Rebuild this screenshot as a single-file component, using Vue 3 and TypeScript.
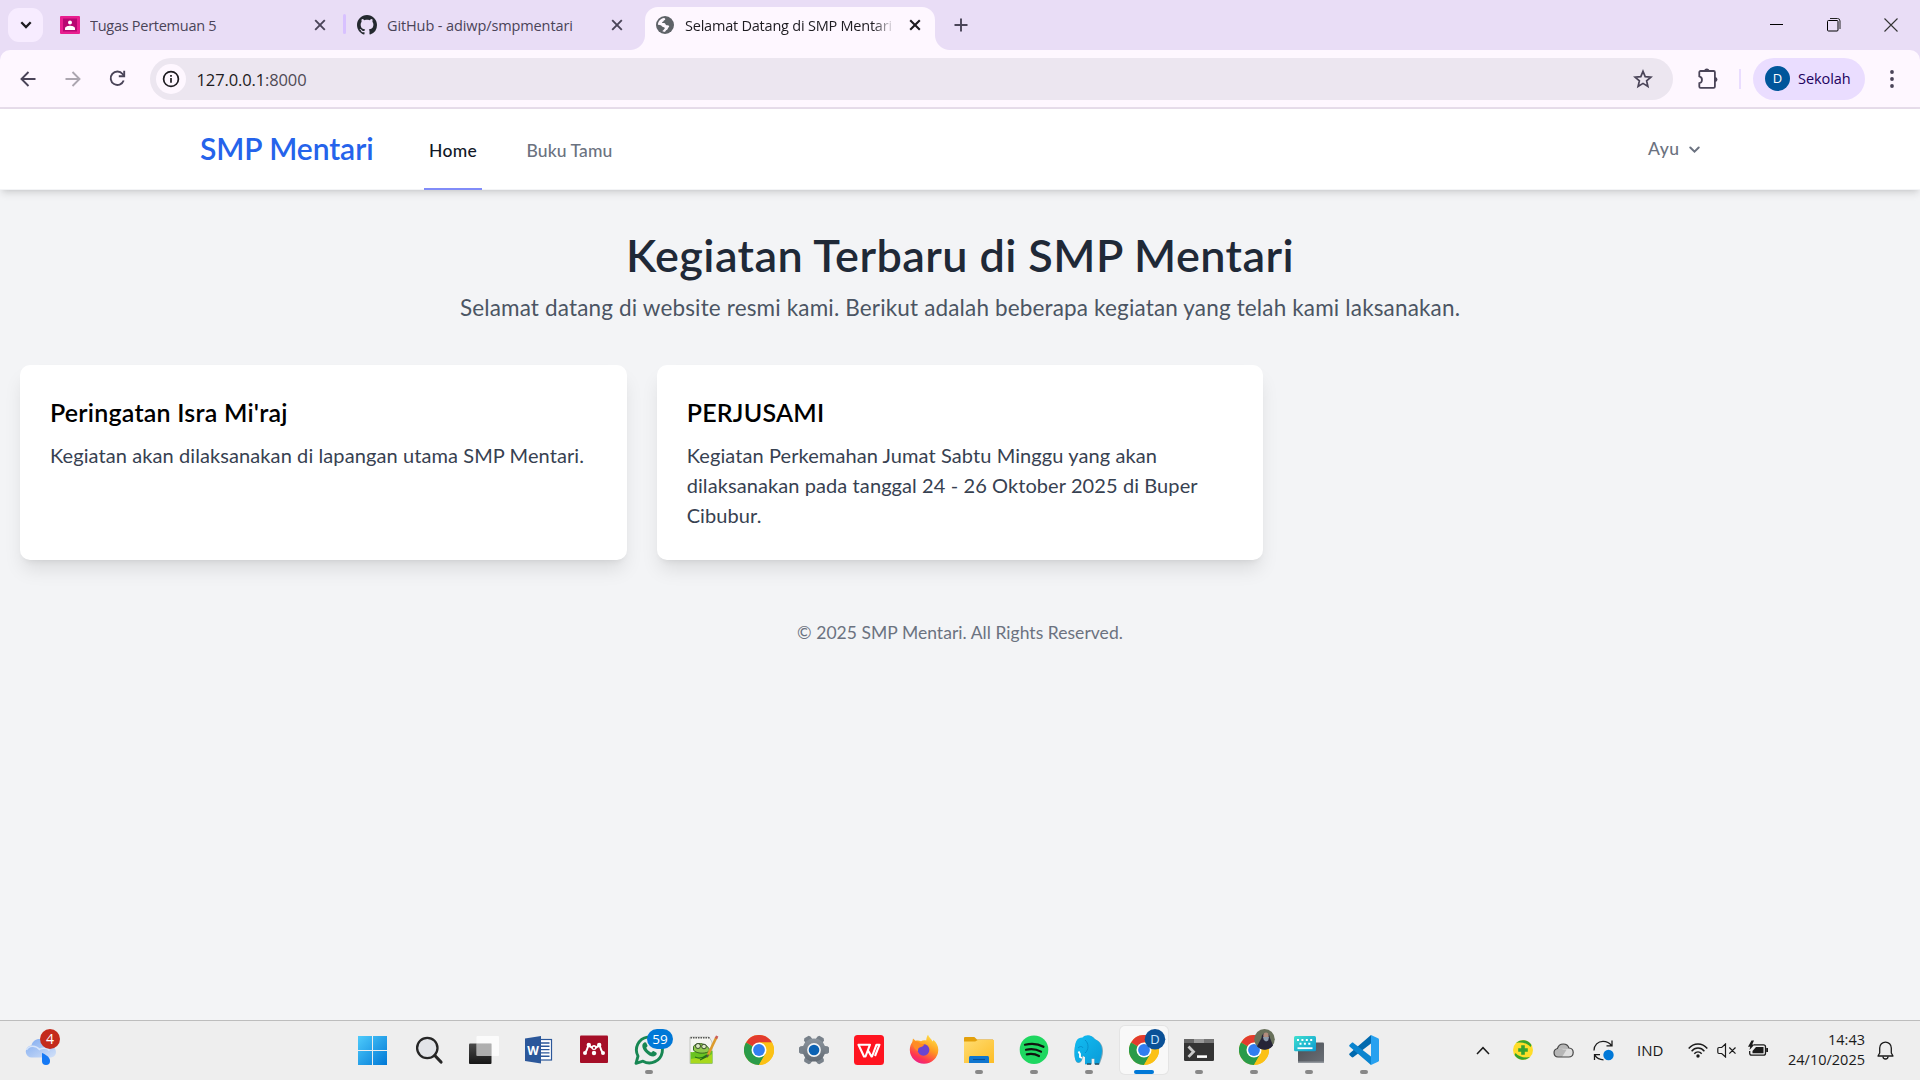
<script setup lang="ts">
import { ref } from 'vue'

interface Activity {
  title: string
  body: string
}

const activities = ref<Activity[]>([
  { title: "Peringatan Isra Mi'raj", body: 'Kegiatan akan dilaksanakan di lapangan utama SMP Mentari.' },
  { title: 'PERJUSAMI', body: 'Kegiatan Perkemahan Jumat Sabtu Minggu yang akan dilaksanakan pada tanggal 24 - 26 Oktober 2025 di Buper Cibubur.' },
])

interface TaskItem {
  icon: string
  state?: 'open' | 'active'
}

const tasks: TaskItem[] = [
  { icon: 'start' },
  { icon: 'search' },
  { icon: 'taskview' },
  { icon: 'word' },
  { icon: 'mendeley' },
  { icon: 'whatsapp', state: 'open' },
  { icon: 'notepad' },
  { icon: 'chrome' },
  { icon: 'settings' },
  { icon: 'wps' },
  { icon: 'firefox' },
  { icon: 'folder', state: 'open' },
  { icon: 'spotify', state: 'open' },
  { icon: 'elephant', state: 'open' },
  { icon: 'chrome-d', state: 'active' },
  { icon: 'terminal', state: 'open' },
  { icon: 'chrome-photo', state: 'open' },
  { icon: 'keyboard', state: 'open' },
  { icon: 'vscode', state: 'open' },
]

const teeth = [30, 90, 150, 210, 270, 330]
</script>

<template>
  <div class="screen">
    <header class="tabstrip">
      <button class="tab-search">
        <svg width="12" height="8" viewBox="0 0 12 8"><path d="M1.3 1.3 6 6l4.700-4.700" fill="none" stroke="#1d1b20" stroke-width="2.300" /></svg>
      </button>
      <div class="tab tab-one">
        <svg class="favicon" width="20" height="18" viewBox="0 0 20 18">
          <rect width="20" height="18" rx="1" fill="#e91e8f" />
          <rect x="3" y="2.500" width="14" height="13" fill="#b80672" />
          <circle cx="10" cy="6.500" r="2" fill="#fff" />
          <path d="M5 14v-1.500c0-2 3-2.800 5-2.800s5 .8 5 2.800V14z" fill="#fff" />
        </svg>
        <span class="tab-title title-one">Tugas Pertemuan 5</span>
        <svg class="close" width="12" height="12" viewBox="0 0 12 12"><path d="M1.200 1.200l9.600 9.600M10.800 1.200l-9.600 9.600" stroke="#4a4458" stroke-width="1.900" /></svg>
      </div>
      <i class="tab-sep"></i>
      <div class="tab tab-two">
        <svg class="favicon" width="20" height="20" viewBox="0 0 16 16"><path fill="#24292f" d="M8 0C3.580 0 0 3.580 0 8c0 3.540 2.290 6.530 5.470 7.590.4.070.55-.17.55-.38 0-.19-.01-.82-.01-1.490-2.010.37-2.530-.49-2.690-.94-.09-.23-.48-.94-.82-1.130-.28-.15-.68-.52-.01-.53.63-.01 1.080.58 1.230.82.72 1.210 1.870.87 2.330.66.07-.52.28-.87.51-1.070-1.780-.2-3.640-.89-3.640-3.950 0-.87.31-1.590.82-2.150-.08-.2-.36-1.020.08-2.120 0 0 .67-.21 2.200.82.64-.18 1.320-.27 2-.27s1.360.09 2 .27c1.530-1.040 2.200-.82 2.200-.82.44 1.100.16 1.920.08 2.120.51.56.82 1.270.82 2.150 0 3.070-1.870 3.750-3.650 3.950.29.25.54.73.54 1.480 0 1.070-.01 1.930-.01 2.200 0 .21.15.46.55.38A8.010 8.010 0 0 0 16 8c0-4.420-3.580-8-8-8z" /></svg>
        <span class="tab-title title-two">GitHub - adiwp/smpmentari</span>
        <svg class="close" width="12" height="12" viewBox="0 0 12 12"><path d="M1.200 1.200l9.600 9.600M10.800 1.200l-9.600 9.600" stroke="#4a4458" stroke-width="1.900" /></svg>
      </div>
      <div class="tab tab-active">
        <svg class="favicon" width="18" height="18" viewBox="0 0 18 18">
          <circle cx="9" cy="9" r="9" fill="#5f6368" />
          <path d="M1.900 8.700C2 5.200 4.600 2.300 8 1.900c.9.100 1.500.7 1.200 1.500-.3.900-1.500.7-1.600 1.500-.1.900-1.400.6-1.500 1.500 0 .8 1 .7 2 .7 1.200 0 1.200 1.300 1.900 1.800.8.600 2.300 0 3 .9.600.9-.5 1.500-.9 2.300-.5.900-.6 1.700-1.500 1.900-.9.300-.8 1.400-1.900 1.800-.8.300-2-.1-2.300-.8l1.200-.9c.3-1 1.300-1.200 1.200-2.200-.2-1-1.500-.7-2.300-1.200C5.600 10 5 9.100 3.800 9z" fill="#fef7ff" />
        </svg>
        <span class="tab-title title-active">Selamat Datang di SMP Mentari</span>
        <svg class="close" width="12" height="12" viewBox="0 0 12 12"><path d="M1.200 1.200l9.600 9.600M10.800 1.200l-9.600 9.600" stroke="#1d1b20" stroke-width="2.100" /></svg>
      </div>
      <svg class="new-tab" width="14" height="14" viewBox="0 0 14 14"><path d="M7 .5v13M.5 7h13" stroke="#4a4458" stroke-width="1.900" /></svg>
      <div class="window-controls">
        <svg width="14" height="14" viewBox="0 0 14 14" shape-rendering="crispEdges"><path d="M0 6.500h13" stroke="#000" /></svg>
        <svg width="14" height="14" viewBox="0 0 14 14"><rect x=".5" y="2.500" width="10.500" height="10.500" rx="1" fill="none" stroke="#000" /><path d="M3 .5h7.500a2.500 2.500 0 0 1 2.500 2.500v8" fill="none" stroke="#222" /></svg>
        <svg width="14" height="14" viewBox="0 0 14 14"><path d="M.5.5l13 13M13.500.5l-13 13" stroke="#333" stroke-width="1.100" /></svg>
      </div>
    </header>

    <div class="toolbar-wrap">
      <div class="toolbar">
        <div class="nav-icons">
          <svg width="16" height="16" viewBox="0 0 16 16"><path d="M15.500 8H2M8.500 1 1.500 8l7 7" fill="none" stroke="#4a4458" stroke-width="1.900" /></svg>
          <svg width="16" height="16" viewBox="0 0 16 16"><path d="M.5 8H14M7.500 1l7 7-7 7" fill="none" stroke="#aca6b0" stroke-width="1.900" /></svg>
          <svg width="17" height="17" viewBox="0 0 17 17"><path d="M14.700 10.500A6.700 6.700 0 1 1 13.600 4l1.400 2" fill="none" stroke="#4a4458" stroke-width="1.900" /><path d="M15.200.8V6.300H9.800" fill="none" stroke="#4a4458" stroke-width="1.900" /></svg>
        </div>
        <div class="omnibox">
          <span class="site-info">
            <svg width="18" height="18" viewBox="0 0 18 18"><circle cx="9" cy="9" r="7.400" fill="none" stroke="#1d1b20" stroke-width="1.700" /><path d="M9 8v4.700M9 4.900v1.900" stroke="#1d1b20" stroke-width="1.700" /></svg>
          </span>
          <span class="url">127.0.0.1<span class="port">:8000</span></span>
          <svg class="star" width="20" height="20" viewBox="0 0 20 20"><path d="M10 2.300l2.200 5.300 5.700.5-4.300 3.700 1.300 5.600L10 14.400l-4.900 3 1.300-5.600-4.300-3.700 5.700-.5z" fill="none" stroke="#4a4458" stroke-width="1.700" /></svg>
        </div>
        <svg class="puzzle" width="22" height="22" viewBox="0 0 22 22"><path d="M2.300 4.300c0-.8.500-1.300 1.300-1.300h13c.8 0 1.300.5 1.300 1.300v14.200c0 .8-.5 1.300-1.300 1.300h-13c-.8 0-1.300-.5-1.300-1.300v-3.300c3.300-.5 3.800-5.800 0-6.800z" fill="none" stroke="#4a4458" stroke-width="1.800" /><path d="M7.200 3a2.600 2.600 0 0 1 5.200 0zM18 9a2.500 2.500 0 0 1 0 5z" fill="#4a4458" /></svg>
        <i class="tool-sep"></i>
        <div class="profile"><span class="avatar">D</span><span class="profile-name">Sekolah</span></div>
        <svg class="menu-dots" width="4" height="18" viewBox="0 0 4 18"><circle cx="2" cy="2" r="1.900" fill="#4a4458" /><circle cx="2" cy="9" r="1.900" fill="#4a4458" /><circle cx="2" cy="16" r="1.900" fill="#4a4458" /></svg>
      </div>
    </div>

    <div class="page">
      <nav class="navbar">
        <div class="navbar-inner">
          <a class="brand">SMP Mentari</a>
          <a class="link link-active">Home</a>
          <a class="link link-guest">Buku Tamu</a>
          <div class="user">
            <span>Ayu</span>
            <svg width="11" height="8" viewBox="0 0 11 8"><path d="M1.300 1.500 5.500 5.700 9.700 1.500" fill="none" stroke="#6b7280" stroke-width="2" stroke-linecap="round" /></svg>
          </div>
        </div>
      </nav>
      <main class="main">
        <h1>Kegiatan Terbaru di SMP Mentari</h1>
        <p class="lead">Selamat datang di website resmi kami. Berikut adalah beberapa kegiatan yang telah kami laksanakan.</p>
        <section class="cards">
          <article v-for="activity in activities" :key="activity.title" class="card">
            <h2>{{ activity.title }}</h2>
            <p>{{ activity.body }}</p>
          </article>
        </section>
        <footer>© 2025 SMP Mentari. All Rights Reserved.</footer>
      </main>
    </div>

    <div class="taskbar">
      <svg width="0" height="0" class="defs">
        <defs>
          <linearGradient id="winBlue" x1="0" y1="0" x2="1" y2="1"><stop offset="0" stop-color="#4ecbfb" /><stop offset="1" stop-color="#0078d6" /></linearGradient>
          <linearGradient id="darkSheet" x1="0" y1="0" x2="0" y2="1"><stop offset="0" stop-color="#4a4a4a" /><stop offset="1" stop-color="#161616" /></linearGradient>
          <linearGradient id="foldYellow" x1="0" y1="0" x2="1" y2="1"><stop offset="0" stop-color="#ffdc71" /><stop offset="1" stop-color="#fdbd26" /></linearGradient>
          <linearGradient id="foxOrange" x1=".8" y1="0" x2=".3" y2="1"><stop offset="0" stop-color="#ffe64a" /><stop offset=".45" stop-color="#ff9a1f" /><stop offset=".8" stop-color="#ff3750" /><stop offset="1" stop-color="#e91e8c" /></linearGradient>
          <linearGradient id="keyTeal" x1="0" y1="0" x2="1" y2="1"><stop offset="0" stop-color="#3fe0cf" /><stop offset="1" stop-color="#0a9ad2" /></linearGradient>
          <linearGradient id="slate" x1="0" y1="0" x2="1" y2="1"><stop offset="0" stop-color="#4a4e54" /><stop offset="1" stop-color="#6b7077" /></linearGradient>
          <linearGradient id="gearGrey" x1="0" y1="0" x2="0" y2="1"><stop offset="0" stop-color="#8b949d" /><stop offset="1" stop-color="#626a73" /></linearGradient>
          <linearGradient id="cloudBlue" x1="0" y1="0" x2="1" y2="1"><stop offset="0" stop-color="#7fabf0" /><stop offset="1" stop-color="#d3e1f8" /></linearGradient>
          <linearGradient id="elephantBlue" x1="0" y1="0" x2="1" y2="1"><stop offset="0" stop-color="#12bdf2" /><stop offset="1" stop-color="#0a9bd8" /></linearGradient>
          <symbol id="chromeLogo" viewBox="0 0 30 30">
            <circle cx="15" cy="15" r="15" fill="#fbc116" />
            <path d="M15 15 2 7.500A15 15 0 0 1 28 7.500H15z" fill="#e33b2e" />
            <path d="M2 7.500A15 15 0 0 0 15 30L21.500 18.750 15 15z" fill="#2a9b49" />
            <path d="M15 7.500H28A15 15 0 0 1 15 30L21.500 18.750z" fill="#fbc116" />
            <circle cx="15" cy="15" r="7.500" fill="#fff" />
            <circle cx="15" cy="15" r="5.900" fill="#327ef0" />
          </symbol>
        </defs>
      </svg>

      <div class="weather">
        <svg width="36" height="40" viewBox="0 0 36 40">
          <path d="M7 29.500a6 6 0 0 1-.5-12C7.300 13.500 10.500 11 14.500 11c4.500 0 8 3 8.500 7 4.500-.5 8 2 8 6 0 3.300-2.500 5.500-6 5.500z" fill="url(#cloudBlue)" />
          <path d="M1.500 22c2-4.500 9-5.500 13-.5 3-2 8-1.500 10 1" stroke="#e4eefc" stroke-width="1.500" fill="none" opacity=".8" />
          <path d="M17 25c3.500 1.500 8 4 8 8a4 4 0 0 1-8 0z" fill="#1579f5" />
        </svg>
        <span class="weather-badge">4</span>
      </div>

      <div class="tasks">
        <div v-for="(task, i) in tasks" :key="i" class="task" :class="task.state">
          <svg width="48" height="48" viewBox="0 0 48 48">
            <g v-if="task.icon === 'start'">
              <path d="M8 10h14v14H8zM23 10h14v14H23zM8 25h14v14H8zM23 25h14v14H23z" fill="url(#winBlue)" />
            </g>
            <g v-else-if="task.icon === 'search'">
              <circle cx="22.300" cy="22" r="10.200" fill="#e2e4e8" stroke="#262626" stroke-width="2.300" />
              <path d="M29.800 29.500l6.200 6.500" stroke="#262626" stroke-width="3.200" stroke-linecap="round" />
            </g>
            <g v-else-if="task.icon === 'taskview'">
              <rect x="9" y="17.500" width="22.500" height="20.500" rx="1" fill="url(#darkSheet)" />
              <rect x="16.500" y="10" width="22.500" height="20" rx="1" fill="#fff" fill-opacity=".78" />
              <path d="M16.500 17.500h15V30h-15z" fill="#8f8f8f" fill-opacity=".55" />
            </g>
            <g v-else-if="task.icon === 'word'">
              <rect x="24" y="13.500" width="12.500" height="20.500" fill="#fff" stroke="#2b579a" stroke-width="1.200" />
              <path d="M26 17h8.500M26 20.300h8.500M26 23.600h8.500M26 26.900h8.500M26 30.200h8.500" stroke="#2b579a" stroke-width="1.400" />
              <path d="M10 12.500 26 10v27.500L10 35z" fill="#2b579a" />
              <text x="18" y="28.500" text-anchor="middle" class="glyph" font-size="12" font-weight="700" fill="#fff">W</text>
            </g>
            <g v-else-if="task.icon === 'mendeley'">
              <rect x="10" y="9.500" width="28" height="27.500" rx="1" fill="#a50e27" />
              <path d="M15.500 26c1.800-1.500 1.300-3.500 2.800-6 2.200-.5 3.500 2.400 5.700 2.400s3.500-2.900 5.700-2.400c1.500 2.500 1 4.500 2.800 6" fill="none" stroke="#fff" stroke-width="2" />
              <circle cx="18.800" cy="19" r="2.200" fill="#fff" /><circle cx="29.200" cy="19" r="2.200" fill="#fff" />
              <circle cx="24" cy="21.500" r="2.500" fill="#fff" /><circle cx="24" cy="21.800" r="1.100" fill="#a50e27" />
              <circle cx="15" cy="27" r="2" fill="#fff" /><circle cx="24" cy="27" r="2.200" fill="#fff" /><circle cx="33" cy="27" r="2" fill="#fff" />
            </g>
            <g v-else-if="task.icon === 'whatsapp'">
              <path d="M11 37.300l2-7.200a13 13 0 1 1 5 5.100z" fill="#ededed" stroke="#178753" stroke-width="2.900" stroke-linejoin="round" />
              <path d="M19.300 16.500c-3 1.500-2.600 5.600 1.200 9.700 3.800 4 8.400 5.700 10.700 2.900.8-1 .6-2 0-2.500l-2.700-1.600c-1-.5-1.500 1.600-2.500 1.400-2-.7-4-2.700-4.700-4.600 0-.8 1.600-1.300 1.200-2.400l-1.300-2.600c-.4-.7-1.200-.7-1.900-.3z" fill="#178753" />
              <rect x="22" y="3" width="26" height="20" rx="10" fill="#0078d7" />
              <text x="35" y="18" text-anchor="middle" class="glyph" font-size="13.500" fill="#fff">59</text>
            </g>
            <g v-else-if="task.icon === 'notepad'">
              <path d="M10 11h19l3 5v21.500H10z" fill="#f4f5f1" stroke="#b6b9b2" stroke-width=".8" />
              <path d="M10.500 11.700h20" stroke="#555" stroke-width="1.600" stroke-dasharray="1.500 1" />
              <path d="M10.500 26c5 1 7-3 12-2 4 1 7-1 10 1v12.500h-22z" fill="#6ac321" />
              <path d="M11 33c6-2 14 1 21-5v9H11z" fill="#a8d81c" />
              <path d="M13.500 20.500c2-3.500 8-4 12.500-1 3.500 2.500 4.500 5 2 6.500-4 2-12.500 1.500-14.500-2z" fill="#90c94b" stroke="#2e5d18" stroke-width=".9" />
              <circle cx="18" cy="20" r="2.500" fill="#dbe8c2" stroke="#293d20" stroke-width=".9" /><circle cx="24" cy="20.500" r="2.300" fill="#dbe8c2" stroke="#293d20" stroke-width=".9" />
              <path d="M15 31c4 2 8 1 12-2M20 34l8-4" stroke="#256d17" fill="none" stroke-width="1.200" />
              <path d="M36.300 11.500 28 29" stroke="#dc9b2c" stroke-width="2.600" /><path d="M37.200 10l-1.300 2.600" stroke="#cb5d55" stroke-width="2.600" /><path d="M28.300 28.500l-1.200 2.800" stroke="#5d5348" stroke-width="1.500" />
            </g>
            <use v-else-if="task.icon === 'chrome'" href="#chromeLogo" x="9" y="9" width="30" height="30" />
            <g v-else-if="task.icon === 'settings'">
              <path v-for="angle in teeth" :key="angle" d="M19.500 18l.8-7.500L21.500 9h5l1.200 1.500.8 7.500z" fill="#78818a" :transform="`rotate(${angle} 24 24)`" />
              <circle cx="24" cy="24" r="11.500" fill="url(#gearGrey)" />
              <circle cx="24" cy="24" r="6.900" fill="#f3f4f5" /><circle cx="24" cy="24" r="5.300" fill="#0b62b3" />
            </g>
            <g v-else-if="task.icon === 'wps'">
              <rect x="9" y="9" width="30" height="30" rx="3.500" fill="#ff1420" />
              <path d="M13.500 18.700h11.500L20.500 30.500l-1.500 0zM23 24.500l3.500 6h.5l4.500-11.800h3L30 30" fill="none" stroke="#fff" stroke-width="2.100" stroke-linejoin="round" />
            </g>
            <g v-else-if="task.icon === 'firefox'">
              <path d="M28 8.800c1 3 3.500 4 4.500 6.700l1-1.500c3 2.500 4.800 6 4.800 10A14.200 14.200 0 0 1 24 37.800 14.200 14.200 0 0 1 9.800 24c0-3.300 1-6 2.500-8l.7-3.500 2.500 2.300c2-.7 4-.4 5.500.4 1.500-1 3.500-1.200 5.200-.7.2-2 .6-4 1.800-5.700z" fill="url(#foxOrange)" />
              <circle cx="23.500" cy="23.800" r="5.900" fill="#6b45d0" />
              <path d="M13 15.500c3-1 6 .5 7.500 2.300l4 .4c-1 2-3 2.700-4.800 3.200-1.700.5-1.700 2.300-1.700 3.600-3-1-6-5-5-9.500z" fill="#ff8b25" />
            </g>
            <g v-else-if="task.icon === 'folder'">
              <path d="M9 12.300c0-.8.500-1.300 1.300-1.300H19c.8 0 2 1.800 3 2.500H38l1 4H9z" fill="#e3a00b" />
              <path d="M9 15.500h11c1 0 2-1.500 3-1.500h16v23H9z" fill="url(#foldYellow)" />
              <path d="M14 37v-5.500c0-1 .6-1.600 1.600-1.600h16.800c1 0 1.600.6 1.600 1.600V37z" fill="#1076cf" />
              <path d="M18 33.500h12" stroke="#0a4f96" stroke-width="1.100" />
            </g>
            <g v-else-if="task.icon === 'spotify'">
              <circle cx="24" cy="23.700" r="14.300" fill="#1ed760" />
              <path d="M15 18.700c6-1.500 13.500-.8 18.500 2.100M16 23.700c5-1.200 10.500-.6 15 1.900M16.800 28.300c4.300-.9 8.500-.4 12.200 1.700" fill="none" stroke="#10150f" stroke-linecap="round" stroke-width="2.200" />
            </g>
            <g v-else-if="task.icon === 'elephant'">
              <path d="M18 12c3-3.500 10-3 12.500 1.500C35 15 38 19.500 38 25c0 4.500-1.500 8-3.500 13.500h-5V33h-3v5.500h-6.500V31l-2-1c-.5 3-1 7-4.500 7-3 0-4-5-4-9 0-5 .5-13 4.500-15 1.300-.6 2.700-1 4-1z" fill="#246d8b" opacity=".55" />
              <path d="M17.500 11.500c3-3.500 9.500-3 12 1.500 4.500 1.500 7.500 6 7.500 11.500 0 4.500-1.500 8-3 13.500h-4.500v-5.500h-3V38H20v-7l-2.500-1.500c-.5 3-1 7-4 7s-4-5-4-9c0-5 .5-13 4-15 1.300-.6 2.700-1 4-1z" fill="url(#elephantBlue)" />
              <path d="M20 14c4 3 4 10 0 13M13 22c2-2 4-2 5 0" fill="none" stroke="#078cc7" stroke-width=".9" />
              <path d="M13.500 25.500l1.500 2.500v3l2 1" stroke="#fff" stroke-width="1.900" fill="none" />
              <path d="M22 38h4M30 38h4" stroke="#264f61" stroke-width="1.600" />
            </g>
            <g v-else-if="task.icon === 'chrome-d'">
              <use href="#chromeLogo" x="9" y="9" width="30" height="30" />
              <circle cx="35" cy="13.300" r="10.300" fill="#0b5197" />
              <text x="35" y="18.200" text-anchor="middle" class="glyph" font-size="13" fill="#c9e4ff">D</text>
            </g>
            <g v-else-if="task.icon === 'terminal'">
              <rect x="9" y="13" width="30" height="22" rx="1.300" fill="#343434" />
              <path d="M9 14.300c0-.8.500-1.300 1.300-1.300H19v4H9z" fill="#666" /><path d="M19 13h10v4H19z" fill="#9a9a9a" /><path d="M29 13h8.700c.8 0 1.300.5 1.300 1.300V17H29z" fill="#757575" />
              <path d="M13.500 20.500l5 5.200-5 5.200" fill="none" stroke="#c9c9c9" stroke-width="2.800" /><path d="M22 30.600h10" stroke="#fff" stroke-width="2.600" />
            </g>
            <g v-else-if="task.icon === 'chrome-photo'">
              <use href="#chromeLogo" x="9" y="9" width="30" height="30" />
              <circle cx="34.500" cy="13.200" r="10.300" fill="#68705a" />
              <path d="M31.500 12c0-6 8-7 8.500 0l3 7.500a10.300 10.300 0 0 1-16 .8z" fill="#262437" />
              <ellipse cx="36" cy="9.800" rx="2.700" ry="3.200" fill="#b28d7d" /><path d="M33 11h6l-.8 3.500-2.200 1-2.200-1.500z" fill="#8b9aab" />
            </g>
            <g v-else-if="task.icon === 'keyboard'">
              <rect x="13" y="16.500" width="26" height="20.500" rx="1" fill="url(#slate)" /><path d="M13 35.500h26V37H13z" fill="#92979d" />
              <rect x="9" y="10" width="22" height="15.300" rx="1.500" fill="url(#keyTeal)" />
              <path d="M12 14h16.500M14.500 17.700h12" stroke="#fff" stroke-width="2" stroke-dasharray="2 2.400" /><path d="M12.500 22.200h15" stroke="#fff" stroke-width="1.800" />
            </g>
            <g v-else>
              <path d="M31 9 9.800 27.200c-.8.700-.8 1.500-.1 2.100l1.900 1.700c.6.500 1.300.5 1.900.1L31 17.500z" fill="#0069ae" />
              <path d="M31 39 9.800 20.800c-.8-.7-.8-1.500-.1-2.100l1.900-1.700c.6-.5 1.300-.5 1.900-.1L31 30.500z" fill="#0a84cf" />
              <path d="M31 9l7 3.200c.6.300 1 .8 1 1.500v20.600c0 .7-.4 1.200-1 1.500L31 39z" fill="#27a1f0" />
            </g>
          </svg>
          <i v-if="task.state" class="indicator"></i>
        </div>
      </div>

      <div class="tray">
        <svg class="t-up" width="14" height="9" viewBox="0 0 14 9"><path d="M1 8l6-6.300L13 8" fill="none" stroke="#1b1b1b" stroke-width="1.500" /></svg>
        <svg class="t-safe" width="20" height="20" viewBox="0 0 20 20"><circle cx="10" cy="10" r="10" fill="#ffdd29" /><path d="M3 3a10 10 0 0 1 15.500 2l-1 2C14 3 8.500 1.800 3 3zM17 17A10 10 0 0 1 1.500 15l1-2c3.500 4 9 5.200 14.500 4z" fill="#35a32f" /><path d="M8.200 5.200h3.600v3h3v3.600h-3v3H8.200v-3h-3V8.200h3z" fill="#35a32f" /></svg>
        <svg class="t-cloud" width="21" height="15" viewBox="0 0 21 15"><path d="M5 14a4.300 4.300 0 0 1-.5-8.500C5.200 2.800 7.500 1 10.300 1c2.700 0 4.900 1.600 5.600 4 2.500.2 4.300 2 4.300 4.500 0 2.600-1.900 4.500-4.400 4.500z" fill="#b6b6b6" /><path d="M4.500 5.500C8 4 11 9 16 5c2.500.2 4.200 2 4.200 4.500 0 2.600-1.900 4.500-4.400 4.500H9L14 6z" fill="#dedede" /><path d="M5 14a4.300 4.300 0 0 1-.5-8.500C5.200 2.800 7.500 1 10.300 1c2.700 0 4.900 1.600 5.600 4 2.500.2 4.300 2 4.300 4.500 0 2.600-1.900 4.500-4.400 4.500z" fill="none" stroke="#444" stroke-width="1.200" /></svg>
        <svg class="t-sync" width="21" height="21" viewBox="0 0 21 21"><path d="M1 10.500C1 5 5 1.300 10 1.300c3.600 0 6.700 1.600 8.500 4.300M19 .5v5.300h-5.500M1.500 20v-5.300H7M1.800 15.200c2 3 4.800 4.600 8.700 4.600" fill="none" stroke="#1b1b1b" stroke-width="1.300" /><circle cx="15.500" cy="15" r="5.200" fill="#0078d7" /></svg>
        <span class="t-lang">IND</span>
        <svg class="t-wifi" width="20" height="15" viewBox="0 0 20 15"><path d="M.7 5.500c5-6 13.600-6 18.600 0M3.600 8.200c3.500-4.200 9.300-4.200 12.800 0M6.300 10.700c2-2.400 5.400-2.400 7.400 0" fill="none" stroke="#1b1b1b" stroke-width="1.400" /><circle cx="10" cy="13" r="1.700" fill="#1b1b1b" /></svg>
        <svg class="t-mute" width="20" height="15" viewBox="0 0 20 15"><path d="M8.500 1 4.700 4.500H2c-.8 0-1.200.4-1.200 1.200v3.600c0 .8.400 1.200 1.200 1.200h2.700L8.500 14zM12.300 4.500l6.200 6.200M18.500 4.500l-6.200 6.200" fill="none" stroke="#1b1b1b" stroke-width="1.200" /></svg>
        <svg class="t-battery" width="21" height="18" viewBox="0 0 21 18"><path d="M6 4.800h9.500c1.300 0 2 .7 2 2v6.400c0 1.300-.7 2-2 2H3.700c-1.300 0-2-.7-2-2V11" fill="none" stroke="#1b1b1b" stroke-width="1.300" /><path d="M18.200 8h1.800v4h-1.800z" fill="#1b1b1b" /><path d="M8 7h7.500v6.200H4.500V11zM3.500.5 0 6.800h2.200L1.500 10l5-5.500H4.200L6 .5z" fill="#1b1b1b" /></svg>
        <div class="t-clock"><div>14:43</div><div>24/10/2025</div></div>
        <svg class="t-bell" width="17" height="19" viewBox="0 0 17 19"><path d="M2.700 12V6.900a5.800 5.800 0 0 1 11.600 0V12l1.700 3H1z" fill="none" stroke="#1b1b1b" stroke-width="1.300" stroke-linejoin="round" /><path d="M6 15.500a2.500 2.500 0 0 0 5 0" fill="none" stroke="#1b1b1b" stroke-width="1.300" /></svg>
      </div>
    </div>
  </div>
</template>

<style>
body {
  margin: 0;
  overflow: hidden;
}
</style>

<style scoped>
* {
  box-sizing: border-box;
}
.screen {
  width: 1920px;
  height: 1080px;
  display: flex;
  flex-direction: column;
  overflow: hidden;
  font-family: "Open Sans", "Noto Sans", sans-serif;
}
svg {
  display: block;
  flex: none;
}
.tabstrip {
  height: 50px;
  flex: none;
  display: flex;
  align-items: flex-start;
  background: #e9ddf6;
}
.tab-search {
  width: 35px;
  height: 34px;
  margin: 8px 0 0 8px;
  padding: 0;
  border: 0;
  border-radius: 11px;
  background: #f7ecff;
  display: flex;
  align-items: center;
  justify-content: center;
}
.tab {
  height: 43px;
  margin-top: 7px;
  display: flex;
  align-items: center;
  padding-bottom: 7px;
}
.tab-one {
  width: 300px;
  padding-left: 17px;
}
.tab-two {
  width: 299px;
  padding-left: 11px;
}
.tab-active {
  width: 290px;
  padding-left: 11px;
  border-radius: 13px 13px 0 0;
  background: #fef7ff;
  position: relative;
}
.tab-active::before,
.tab-active::after {
  content: "";
  position: absolute;
  bottom: 0;
  width: 15px;
  height: 15px;
}
.tab-active::before {
  left: -15px;
  background: radial-gradient(circle at 0 0, transparent 14.5px, #fef7ff 15.5px);
}
.tab-active::after {
  right: -15px;
  background: radial-gradient(circle at 100% 0, transparent 14.5px, #fef7ff 15.5px);
}
.tab-title {
  font-size: 14.5px;
  line-height: 20px;
  padding-top: 2px;
  white-space: nowrap;
  overflow: hidden;
  color: #4a4458;
  flex: none;
}
.title-one {
  margin-left: 10px;
  width: 224px;
  letter-spacing: -0.27px;
}
.title-two {
  margin-left: 10px;
  width: 224px;
  letter-spacing: -0.11px;
}
.title-active {
  margin-left: 11px;
  width: 210px;
  letter-spacing: -0.22px;
  color: #1d1b20;
  -webkit-mask-image: linear-gradient(90deg, #000 188px, transparent 210px);
  mask-image: linear-gradient(90deg, #000 188px, transparent 210px);
}
.title-active + .close {
  margin-left: 14px;
}
.tab-sep {
  width: 3px;
  height: 20px;
  margin-top: 14px;
  border-radius: 1.5px;
  background: #d8c1ff;
}
.new-tab {
  margin: 18px 0 0 19px;
}
.window-controls {
  display: flex;
  gap: 43px;
  margin: 18px 22px 0 auto;
}
.toolbar-wrap {
  height: 59px;
  flex: none;
  background: #e9ddf6;
}
.toolbar {
  height: 59px;
  display: flex;
  align-items: center;
  border-radius: 10px 10px 0 0;
  border-bottom: 2px solid #e6dcea;
  background: #fef7ff;
}
.nav-icons {
  width: 150px;
  display: flex;
  align-items: center;
  gap: 28.5px;
  padding-left: 20px;
}
.omnibox {
  width: 1523px;
  height: 42px;
  border-radius: 21px;
  background: #ece6f0;
  display: flex;
  align-items: center;
  padding: 0 20px 0 6px;
}
.site-info {
  width: 30px;
  height: 30px;
  border-radius: 50%;
  background: #fef7ff;
  display: flex;
  align-items: center;
  justify-content: center;
}
.url {
  margin-left: 10.5px;
  padding-top: 2px;
  font-size: 16.5px;
  letter-spacing: -0.12px;
  color: #1d1b20;
}
.port {
  color: #4f4a55;
}
.star {
  margin-left: auto;
}
.puzzle {
  margin-left: 23.5px;
}
.tool-sep {
  width: 2px;
  height: 20px;
  margin-left: 20.5px;
  background: #eaddff;
}
.profile {
  width: 112px;
  height: 42px;
  margin-left: 12px;
  border-radius: 21px;
  background: #eaddff;
  display: flex;
  align-items: center;
  padding-left: 12px;
}
.avatar {
  width: 25px;
  height: 25px;
  border-radius: 50%;
  background: #00569b;
  color: #fff;
  font-size: 13px;
  line-height: 25px;
  text-align: center;
}
.profile-name {
  margin-left: 8px;
  font-size: 14.5px;
  letter-spacing: -0.05px;
  color: #21005d;
}
.menu-dots {
  margin-left: 25px;
}
.page {
  flex: 1;
  min-height: 0;
  background: #f3f4f6;
  font-family: Lato, "Open Sans", sans-serif;
}
.navbar {
  height: 81px;
  background: #fff;
  border-bottom: 1px solid #f3f4f6;
  box-shadow: 0 5px 7.5px -1.25px rgba(0, 0, 0, 0.1), 0 2.5px 5px -2.5px rgba(0, 0, 0, 0.1);
  position: relative;
}
.navbar-inner {
  width: 1600px;
  height: 81px;
  margin: 0 auto;
  padding: 0 20px 0 40px;
  display: flex;
}
.brand {
  width: 224px;
  padding-top: 21px;
  font-size: 30px;
  line-height: 36px;
  font-weight: 600;
  letter-spacing: -0.06px;
  color: #2563eb;
}
.link {
  padding: 31px 5px 0 5.5px;
  font-size: 17.5px;
  line-height: 21px;
  font-weight: 500;
  letter-spacing: 0.09px;
  color: #6b7280;
  white-space: nowrap;
}
.link-active {
  width: 58px;
  padding-left: 5px;
  letter-spacing: 0.3px;
  color: #111827;
  border-bottom: 2px solid #818cf8;
}
.link-guest {
  margin-left: 39px;
}
.user {
  margin-left: auto;
  width: 92px;
  height: 24px;
  margin-top: 27.5px;
  display: flex;
  align-items: center;
  font-size: 17.5px;
  font-weight: 500;
  letter-spacing: 0.5px;
  color: #6b7280;
}
.user svg {
  margin: 2px 0 0 9px;
}
.main {
  padding: 39.5px 20px 0;
}
h1 {
  margin: 0;
  font-size: 45px;
  line-height: 50px;
  font-weight: 600;
  letter-spacing: 0.4px;
  text-align: center;
  color: #1f2937;
}
.lead {
  margin: 10px 0 0;
  font-size: 22.5px;
  line-height: 35px;
  letter-spacing: 0.155px;
  text-align: center;
  color: #4b5563;
}
.cards {
  display: grid;
  grid-template-columns: repeat(3, 1fr);
  gap: 30px;
  margin-top: 40.5px;
}
.card {
  height: 195px;
  padding: 29.5px 30px 0;
  border-radius: 10px;
  background: #fff;
  box-shadow: 0 12.5px 18.75px -3.75px rgba(0, 0, 0, 0.1), 0 5px 7.5px -5px rgba(0, 0, 0, 0.1);
}
.card h2 {
  margin: 0;
  font-size: 25px;
  line-height: 35px;
  font-weight: 600;
  letter-spacing: 0.22px;
  color: #000;
}
.card p {
  margin: 10px 0 0;
  font-size: 20px;
  line-height: 30px;
  letter-spacing: 0.09px;
  color: #374151;
}
footer {
  margin-top: 60px;
  font-size: 17.5px;
  line-height: 25px;
  letter-spacing: 0.04px;
  text-align: center;
  color: #6b7280;
}
.taskbar {
  height: 60px;
  flex: none;
  border-top: 1px solid #bdbdbd;
  background: #eee;
  display: flex;
  align-items: flex-start;
  color: #1b1b1b;
}
.defs {
  position: absolute;
}
.weather {
  width: 350px;
  padding: 7px 0 0 25px;
  position: relative;
}
.weather-badge {
  position: absolute;
  left: 40px;
  top: 8px;
  width: 20px;
  height: 20px;
  border-radius: 50%;
  background: #c42b1c;
  color: #fff;
  font-size: 14px;
  line-height: 20px;
  text-align: center;
}
.tasks {
  display: flex;
  gap: 7px;
  padding-top: 5px;
}
.task {
  width: 48px;
  height: 48px;
  border-radius: 5px;
  position: relative;
}
.task.active {
  background: #f8f8f8;
  box-shadow: 0 0 0 1px #e4e4e4;
}
.indicator {
  position: absolute;
  left: 20px;
  bottom: 0;
  width: 8px;
  height: 4px;
  border-radius: 2px;
  background: #888;
}
.active .indicator {
  left: 14px;
  width: 20px;
  background: #0078d7;
}
.glyph {
  font-family: "Open Sans", sans-serif;
}
.tray {
  flex: 1;
  height: 58px;
  display: flex;
  align-items: center;
}
.t-up {
  margin-left: 88px;
}
.t-safe {
  margin-left: 23px;
}
.t-cloud {
  margin-left: 20px;
}
.t-sync {
  margin-left: 19px;
}
.t-lang {
  width: 51px;
  margin-left: 23px;
  font-size: 15px;
}
.t-mute {
  margin-left: 9px;
}
.t-battery {
  margin-left: 11px;
  margin-top: -3px;
}
.t-clock {
  width: 96px;
  font-size: 14.5px;
  line-height: 20px;
  text-align: right;
}
.t-bell {
  margin-left: 12px;
}
</style>
